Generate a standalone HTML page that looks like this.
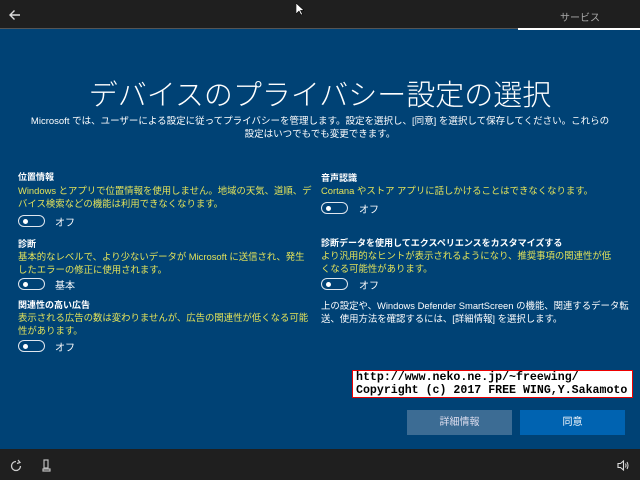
<!DOCTYPE html>
<html><head><meta charset="utf-8"><style>
*{margin:0;padding:0;box-sizing:border-box}
body{width:640px;height:480px;overflow:hidden;background:#004275;font-family:"Liberation Sans","Noto Sans CJK JP",sans-serif;color:#fff;position:relative}
.top{position:absolute;left:0;top:0;width:640px;height:29px;background:#1f1f1f;border-bottom:1px solid #555}
.tab{position:absolute;left:518px;top:28px;width:122px;height:2px;background:#fff}
.svc{position:absolute;left:560px;top:9px;font-size:10px;color:#aaa}
.bot{position:absolute;left:0;top:449px;width:640px;height:31px;background:#1f1f1f}
.a{position:absolute;white-space:nowrap}
h1{position:absolute;left:0;width:640px;top:72px;text-align:center;font-size:29px;font-weight:300;letter-spacing:0}
.desc{position:absolute;left:0;width:640px;top:115px;text-align:center;font-size:9.5px;line-height:13px;white-space:nowrap}
.h{font-size:9px;font-weight:bold}
.y{color:#e2e25a;font-size:9.4px;line-height:13px}
.tg{position:absolute;width:27px;height:12px;border:1.5px solid #dfe6ee;border-radius:6px}
.tg:after{content:"";position:absolute;left:4px;top:2.5px;width:5px;height:5px;border-radius:50%;background:#fff}
.lb{font-size:10px}
.btn{position:absolute;top:410px;height:25px;width:105px;text-align:center;line-height:25px;font-size:10px}
.wm{position:absolute;left:352px;top:370px;width:281px;height:28px;background:#fff;border:1px solid #e00;color:#000;font-family:"Liberation Mono",monospace;font-weight:bold;font-size:11.6px;line-height:12.5px;padding:1px 3px;white-space:pre;overflow:hidden}
</style></head><body>
<div class="top"></div><div class="tab"></div>
<svg class="a" style="left:8px;top:8px" width="14" height="14"><path d="M12 7H2M6.5 2.5L2 7l4.5 4.5" stroke="#ddd" stroke-width="1.4" fill="none"/></svg>
<svg class="a" style="left:296px;top:3px" width="8" height="13"><path d="M0 0v11l3-3 2 4 1.5-.8-2-3.8H8z" fill="#fff" stroke="#000" stroke-width=".6"/></svg>
<div class="svc">サービス</div>
<h1>デバイスのプライバシー設定の選択</h1>
<div class="desc">Microsoft では、ユーザーによる設定に従ってプライバシーを管理します。設定を選択し、[同意] を選択して保存してください。これらの<br>設定はいつでもでも変更できます。</div>

<div class="a h" style="left:18px;top:170px">位置情報</div>
<div class="a y" style="left:18px;top:184px">Windows とアプリで位置情報を使用しません。地域の天気、道順、デ<br>バイス検索などの機能は利用できなくなります。</div>
<div class="tg" style="left:18px;top:215px"></div><div class="a lb" style="left:55px;top:214px">オフ</div>

<div class="a h" style="left:18px;top:237px">診断</div>
<div class="a y" style="left:18px;top:250px">基本的なレベルで、より少ないデータが Microsoft に送信され、発生<br>したエラーの修正に使用されます。</div>
<div class="tg" style="left:18px;top:278px"></div><div class="a lb" style="left:55px;top:277px">基本</div>

<div class="a h" style="left:18px;top:298px">関連性の高い広告</div>
<div class="a y" style="left:18px;top:311px">表示される広告の数は変わりませんが、広告の関連性が低くなる可能<br>性があります。</div>
<div class="tg" style="left:18px;top:340px"></div><div class="a lb" style="left:55px;top:339px">オフ</div>

<div class="a h" style="left:321px;top:171px">音声認識</div>
<div class="a y" style="left:321px;top:184px">Cortana やストア アプリに話しかけることはできなくなります。</div>
<div class="tg" style="left:321px;top:202px"></div><div class="a lb" style="left:359px;top:201px">オフ</div>

<div class="a h" style="left:321px;top:236px">診断データを使用してエクスペリエンスをカスタマイズする</div>
<div class="a y" style="left:321px;top:249px">より汎用的なヒントが表示されるようになり、推奨事項の関連性が低<br>くなる可能性があります。</div>
<div class="tg" style="left:321px;top:278px"></div><div class="a lb" style="left:359px;top:277px">オフ</div>

<div class="a" style="left:321px;top:299px;font-size:9.4px;line-height:13px">上の設定や、Windows Defender SmartScreen の機能、関連するデータ転<br>送、使用方法を確認するには、[詳細情報] を選択します。</div>

<div class="wm">http://www.neko.ne.jp/~freewing/
Copyright (c) 2017 FREE WING,Y.Sakamoto</div>

<div class="btn" style="left:407px;background:#3c6c94;color:#dde">詳細情報</div>
<div class="btn" style="left:520px;background:#0063b1">同意</div>

<div class="bot"></div>
<svg class="a" style="left:9px;top:459px" width="14" height="14"><path d="M7 2.5A4.5 4.5 0 1 0 11.5 7" stroke="#ccc" stroke-width="1.3" fill="none"/><path d="M9 1l2 2.5-3 1" stroke="#ccc" stroke-width="1.2" fill="none"/></svg>
<svg class="a" style="left:42px;top:459px" width="12" height="14"><path d="M2 1h4v8H2zM1 10h7v2H1z" stroke="#bbb" stroke-width="1.2" fill="none"/></svg>
<svg class="a" style="left:617px;top:460px" width="12" height="11"><path d="M1 3.5h2.5L6.5 1v9L3.5 7.5H1z" fill="none" stroke="#ddd" stroke-width="1.1"/><path d="M8.5 3.5q1 2 0 4M10 2q2 3.5 0 7" stroke="#ddd" fill="none"/></svg>
</body></html>
